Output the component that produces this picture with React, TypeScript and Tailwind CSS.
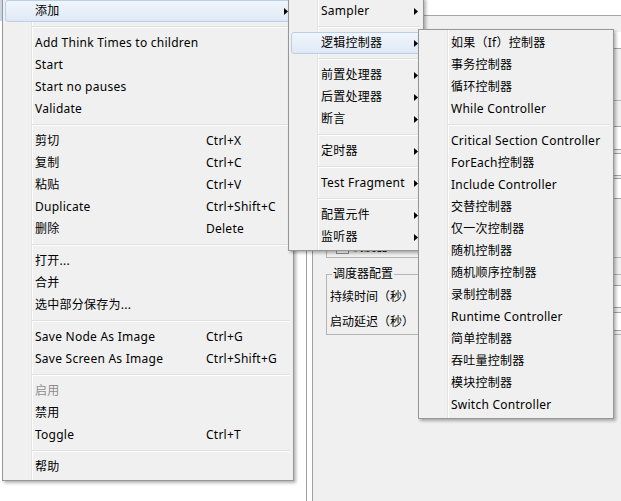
import React from "react";

type Item = { label: string; sc?: string; arrow?: boolean; active?: boolean; disabled?: boolean } | "sep";

const mainItems: Item[] = [
  { label: "添加", arrow: true, active: true },
  "sep",
  { label: "Add Think Times to children" },
  { label: "Start" },
  { label: "Start no pauses" },
  { label: "Validate" },
  "sep",
  { label: "剪切", sc: "Ctrl+X" },
  { label: "复制", sc: "Ctrl+C" },
  { label: "粘贴", sc: "Ctrl+V" },
  { label: "Duplicate", sc: "Ctrl+Shift+C" },
  { label: "删除", sc: "Delete" },
  "sep",
  { label: "打开..." },
  { label: "合并" },
  { label: "选中部分保存为..." },
  "sep",
  { label: "Save Node As Image", sc: "Ctrl+G" },
  { label: "Save Screen As Image", sc: "Ctrl+Shift+G" },
  "sep",
  { label: "启用", disabled: true },
  { label: "禁用" },
  { label: "Toggle", sc: "Ctrl+T" },
  "sep",
  { label: "帮助" },
];

const addItems: Item[] = [
  { label: "Sampler", arrow: true },
  "sep",
  { label: "逻辑控制器", arrow: true, active: true },
  "sep",
  { label: "前置处理器", arrow: true },
  { label: "后置处理器", arrow: true },
  { label: "断言", arrow: true },
  "sep",
  { label: "定时器", arrow: true },
  "sep",
  { label: "Test Fragment", arrow: true },
  "sep",
  { label: "配置元件", arrow: true },
  { label: "监听器", arrow: true },
];

const logicItems: Item[] = [
  { label: "如果（If）控制器" },
  { label: "事务控制器" },
  { label: "循环控制器" },
  { label: "While Controller" },
  "sep",
  { label: "Critical Section Controller" },
  { label: "ForEach控制器" },
  { label: "Include Controller" },
  { label: "交替控制器" },
  { label: "仅一次控制器" },
  { label: "随机控制器" },
  { label: "随机顺序控制器" },
  { label: "录制控制器" },
  { label: "Runtime Controller" },
  { label: "简单控制器" },
  { label: "吞吐量控制器" },
  { label: "模块控制器" },
  { label: "Switch Controller" },
];

function Arrow() {
  return (
    <svg width="4" height="7" viewBox="0 0 4 7" className="ml-auto mr-[2px] shrink-0">
      <polygon points="0,0 4,3.5 0,7" fill="#000" />
    </svg>
  );
}

function Menu({ items, className }: { items: Item[]; className: string }) {
  return (
    <div
      className={`absolute z-10 border border-[#979797] bg-[#f0f0f0] p-[2px] shadow-[2px_2px_3px_rgba(0,0,0,0.3)] tracking-[0.25px] ${className}`}
    >
      {/* gutter */}
      <div className="absolute top-0 bottom-0 left-[28px] w-px bg-[#e2e3e3]" />
      <div className="absolute top-0 bottom-0 left-[29px] w-px bg-white" />
      <div className="relative flex flex-col">
        {items.map((it, i) =>
          it === "sep" ? (
            <div key={i} className="h-[10px] flex flex-col justify-center ml-[27px] mr-[1px]">
              <div className="h-px bg-[#e0e0e0]" />
              <div className="h-px bg-white" />
            </div>
          ) : (
            <div
              key={i}
              className={`h-[22px] flex items-center rounded-[3px] border ${
                it.active
                  ? "border-[#b9d0ec] bg-gradient-to-b from-[#f1f5fb] to-[#dfe9f5]"
                  : "border-transparent"
              }`}
            >
              <span
                className={`pl-[29px] whitespace-nowrap ${it.sc ? "w-[200px] shrink-0" : ""} ${
                  it.disabled ? "text-[#8d8d8d]" : "text-black"
                }`}
              >
                {it.label}
              </span>
              {it.sc && <span className="whitespace-nowrap text-black">{it.sc}</span>}
              {it.arrow && <Arrow />}
            </div>
          )
        )}
      </div>
    </div>
  );
}

export default function App() {
  return (
    <div className="relative w-[621px] h-[501px] overflow-hidden bg-white flex text-[12px] leading-[16px] font-['Noto_Sans','Noto_Sans_CJK_SC',sans-serif]">
      {/* Tree pane */}
      <div className="w-[306px] shrink-0 bg-white flex flex-col">
        <div className="h-[21px] w-[3px] bg-[#c9d7ea]" />
        <div className="mt-[11px] ml-[289px] h-[22px] w-[17px] bg-[#eef2f8] border border-[#c3d1e4]" />
      </div>

      {/* Splitter */}
      <div className="w-[7px] shrink-0 border-x border-[#a0a0a0] bg-white" />

      {/* Thread group panel */}
      <div className="flex-1 bg-[#f0f0f0] flex flex-col">
        <div className="h-[16px] ml-[100px] w-[260px] bg-white border-b border-[#a5a5a5]" />
        <div className="mt-[16px] h-[17px] ml-[100px] w-[260px] bg-white border-b border-[#a5a5a5]" />

        {/* 线程属性 */}
        <div className="mt-[51px] ml-[13px] w-[340px] h-[158px] border border-[#b5b5b5] flex flex-col">
          <div className="mt-[25px] ml-[100px] h-[24px] bg-white border border-[#a5a5a5]" />
          <div className="mt-[3px] ml-[100px] h-[23px] bg-white border border-[#a5a5a5]" />
          <div className="mt-[2px] ml-[100px] h-[21px] bg-white border border-[#a5a5a5]" />
          <div className="mt-[41px] ml-[9px] flex items-center gap-[3px] h-[14px]">
            <div className="w-[13px] h-[13px] bg-white border border-[#8e8f8f]" />
            <span className="text-black">调度器</span>
          </div>
        </div>

        {/* 调度器配置 */}
        <div className="relative mt-[16px] ml-[13px] w-[340px] h-[61px] border border-[#b5b5b5] flex flex-col">
          <span className="absolute -top-[9px] left-[5px] px-[1px] bg-[#f0f0f0] text-black">调度器配置</span>
          <div className="mt-[10px] h-[23px] flex items-center">
            <span className="ml-[3px] text-black whitespace-nowrap">持续时间（秒）</span>
            <div className="ml-auto w-[230px] h-[23px] bg-white border border-[#a5a5a5]" />
          </div>
          <div className="mt-[4px] h-[19px] flex items-center">
            <span className="ml-[3px] text-black whitespace-nowrap">启动延迟（秒）</span>
            <div className="ml-auto w-[230px] h-[19px] bg-white border border-[#a5a5a5]" />
          </div>
        </div>
      </div>

      <Menu items={mainItems} className="left-[2px] -top-[3px] w-[292px]" />
      <Menu items={addItems} className="left-[288px] -top-[3px] w-[136px]" />
      <Menu items={logicItems} className="left-[418px] top-[29px] w-[196px]" />
    </div>
  );
}
